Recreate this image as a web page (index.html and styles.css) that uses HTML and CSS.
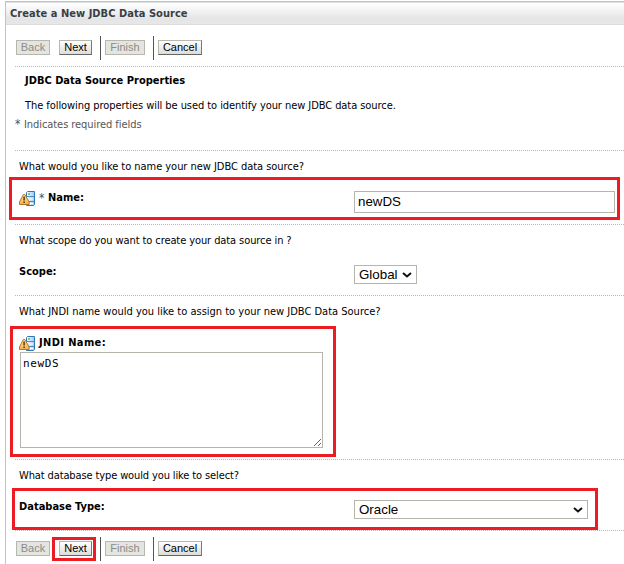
FILE: index.html
```html
<!DOCTYPE html>
<html lang="en">
<head>
<meta charset="utf-8">
<title>Create a New JDBC Data Source</title>
<link rel="stylesheet" href="styles.css">
</head>
<body>
<svg width="0" height="0" class="defs" aria-hidden="true">
  <defs>
    <linearGradient id="srv" x1="0" x2="1" y1="0" y2="0"><stop offset="0" stop-color="#fff"/><stop offset="1" stop-color="#9cc8f0"/></linearGradient>
    <linearGradient id="wrn" x1="0" x2="0" y1="0" y2="1"><stop offset="0" stop-color="#ffe5a0"/><stop offset="1" stop-color="#f5b04c"/></linearGradient>
    <symbol id="restart" viewBox="0 0 16 16">
      <path d="M7.500 1.500l1-1h7v13l-1 1h-7z" fill="url(#srv)" stroke="#2f78b8"/>
      <path d="M8 5.500h7M8 10.500h7" stroke="#4a8cc8"/>
      <path d="M9 3h2" stroke="#2a9a3c"/>
      <path d="M11 8h3M11 12.500h3" stroke="#fff"/>
      <path d="M4.300 3.500h1.600l4.200 7.500v2.500h-9.600v-2.500z" fill="url(#wrn)" stroke="#b8742c" stroke-linejoin="round"/>
      <path d="M5.100 5.500v4M5.100 10.500v1.500" stroke="#4a300c" stroke-width="1.400"/>
    </symbol>
  </defs>
</svg>
<main class="panel">
  <h1 class="title">Create a New JDBC Data Source</h1>
  <div class="body">
    <div class="buttons top">
      <button class="back" disabled>Back</button>
      <button class="next">Next</button>
      <i class="sep"></i>
      <button class="finish" disabled>Finish</button>
      <i class="sep"></i>
      <button class="cancel">Cancel</button>
    </div>
    <section class="intro">
      <h2>JDBC Data Source Properties</h2>
      <p class="desc">The following properties will be used to identify your new JDBC data source.</p>
      <p class="required"><span class="star">*</span> Indicates required fields</p>
    </section>
    <section class="name">
      <p class="q q-name">What would you like to name your new JDBC data source?</p>
      <div class="row">
        <label><svg class="icon"><use href="#restart"/></svg><span class="star">*</span><b>Name:</b></label>
        <input type="text" value="newDS">
      </div>
    </section>
    <section class="scope">
      <p class="q q-scope">What scope do you want to create your data source in ?</p>
      <div class="row">
        <label><b>Scope:</b></label>
        <div class="select small"><span>Global</span><svg width="10" height="6"><path d="M1 1l4 3.500 4-3.500" fill="none" stroke="#111" stroke-width="2"/></svg></div>
      </div>
    </section>
    <section class="jndi">
      <p class="q">What JNDI name would you like to assign to your new JDBC Data Source?</p>
      <label class="stacked"><svg class="icon"><use href="#restart"/></svg><b class="wide">JNDI Name:</b></label>
      <textarea>newDS</textarea>
    </section>
    <section class="database">
      <p class="q q-db">What database type would you like to select?</p>
      <div class="row">
        <label><b>Database Type:</b></label>
        <div class="select large"><span>Oracle</span><svg width="10" height="6"><path d="M1 1l4 3.500 4-3.500" fill="none" stroke="#111" stroke-width="2"/></svg></div>
      </div>
    </section>
    <section class="buttons bottom">
      <button class="back" disabled>Back</button>
      <button class="next">Next</button>
      <i class="sep"></i>
      <button class="finish" disabled>Finish</button>
      <i class="sep"></i>
      <button class="cancel">Cancel</button>
    </section>
  </div>
</main>
<div class="mark mark-name"></div>
<div class="mark mark-jndi"></div>
<div class="mark mark-db"></div>
<div class="mark mark-next"></div>
</body>
</html>
```
FILE: styles.css
```css
* { box-sizing: border-box; }
body {
  margin: 0;
  height: 564px;
  overflow: hidden;
  background: #fff;
  color: #000;
  font: 11px/14px "DejaVu Sans Condensed", "DejaVu Sans", sans-serif;
  white-space: nowrap;
}
.defs { position: absolute; }
h1, h2, p { margin: 0; font-size: 11px; line-height: 14px; }
.panel {
  margin: 1px 0 0 5px;
  height: 563px;
  border-left: 1px solid #c0c4c4;
  border-top: 1px solid #bfc3c3;
}
.title {
  height: 23px;
  padding: 4px 0 0 4px;
  border-top: 1px solid #dfe2e2;
  border-bottom: 1px solid #dcdcdc;
  background: linear-gradient(#fff, #e5e5e5 75%, #e7e7e7);
  color: #3a3f44;
  letter-spacing: .04px;
}
.body { padding-left: 9px; }
.buttons { display: flex; align-items: flex-start; padding-left: 1px; }
.buttons button {
  height: 15px;
  margin: 4px 0 0;
  padding: 0;
  border: 1px solid #b8b8b0;
  border-right-color: #777;
  border-bottom-color: #666;
  background: linear-gradient(#fff, #dcdcd8);
  color: #000;
  font: 11px/13px "Liberation Sans", Arial, sans-serif;
}
.buttons button:disabled { background: #e4e5de; border-color: #b6b8b0; color: #8b8b8b; }
.top { height: 41px; padding-top: 11px; }
.bottom { height: 33px; padding-top: 6px; }
.back { width: 34px; }
.buttons .next { width: 33px; margin-left: 9px; }
.sep { width: 1px; height: 24px; background: #555; margin-left: 8px; }
.finish { width: 40px; }
.buttons .finish, .buttons .cancel { margin-left: 4px; }
.cancel { width: 44px; }
section { border-top: 1px dotted #b8b8b8; }
.intro { height: 84px; padding-top: 7px; }
.intro h2 { margin-left: 10px; }
.desc { margin: 11px 0 0 10px; letter-spacing: -.065px; }
.required { margin-top: 4px; color: #555; letter-spacing: -.06px; }
.star { color: #4a5068; font-size: 12px; }
.required .star { margin-right: .5px; }
.name { height: 74px; }
.scope { height: 71px; }
.jndi { height: 164px; }
.database { height: 71px; }
.q { margin: 9px 0 0 4px; }
.q-name { letter-spacing: -.04px; }
.q-scope { letter-spacing: -.09px; }
.q-db { letter-spacing: -.12px; }
.row { display: flex; padding-left: 4px; }
label { display: flex; width: 335px; height: 16px; }
.name .row { padding-top: 17px; }
.name label b { margin-left: 3px; }
.name label .star { margin-left: 4px; width: 6px; }
.icon { width: 16px; height: 16px; }
input {
  width: 261px;
  height: 22px;
  margin: 0;
  padding: 0 3px 1px;
  border: 1px solid #b5b5ad;
  background: #fff;
  font: 13.33px "Liberation Sans", Arial, sans-serif;
}
.select {
  display: flex;
  align-items: center;
  justify-content: space-between;
  height: 19px;
  padding: 0 4px;
  border: 1px solid #b5b5ad;
  font: 13.33px/17px "Liberation Sans", Arial, sans-serif;
}
.small { width: 63px; }
.large { width: 234px; }
.scope .row { padding-top: 17px; }
.database .row { padding-top: 17px; }
.stacked { margin: 17px 0 0 4px; }
.stacked b { margin-left: 4px; }
.wide { letter-spacing: .38px; }
textarea {
  display: block;
  width: 303px;
  height: 96px;
  margin: 0 0 0 5px;
  padding: 4px 2px;
  border: 1px solid #b5b5ad;
  font: 11px/14px "DejaVu Sans Mono", monospace;
  letter-spacing: .65px;
}
.mark { position: absolute; border: 3px solid #ed1c24; }
.mark-name { left: 9px; top: 177px; width: 611px; height: 43px; }
.mark-jndi { left: 10px; top: 326px; width: 326px; height: 131px; }
.mark-db { left: 12px; top: 488px; width: 586px; height: 42px; }
.mark-next { left: 52px; top: 537px; width: 44px; height: 24px; }
```
